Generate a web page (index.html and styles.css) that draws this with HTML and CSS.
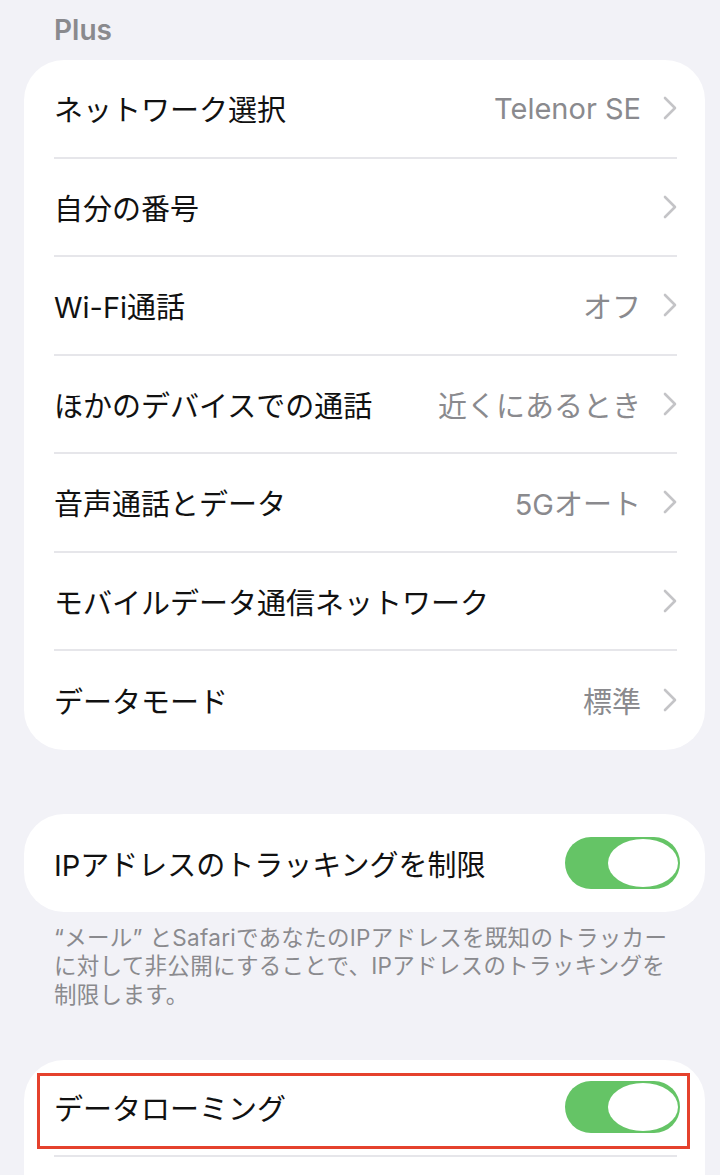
FILE: index.html
```html
<!DOCTYPE html>
<html lang="ja">
<head>
<meta charset="utf-8">
<link rel="stylesheet" href="styles.css">
</head>
<body>
<div class="page">
  <div class="section-title">Plus</div>
  <div class="card">
    <div class="row"><span class="label">ネットワーク選択</span><span class="value">Telenor SE</span><span class="chev"><svg viewBox="0 0 14 24" width="14" height="24"><path d="M2 2 L12 12 L2 22" fill="none" stroke="#c4c4c7" stroke-width="2.6" stroke-linecap="round" stroke-linejoin="round"/></svg></span></div>
    <div class="row"><span class="label">自分の番号</span><span class="value"></span><span class="chev"><svg viewBox="0 0 14 24" width="14" height="24"><path d="M2 2 L12 12 L2 22" fill="none" stroke="#c4c4c7" stroke-width="2.6" stroke-linecap="round" stroke-linejoin="round"/></svg></span></div>
    <div class="row"><span class="label">Wi-Fi通話</span><span class="value">オフ</span><span class="chev"><svg viewBox="0 0 14 24" width="14" height="24"><path d="M2 2 L12 12 L2 22" fill="none" stroke="#c4c4c7" stroke-width="2.6" stroke-linecap="round" stroke-linejoin="round"/></svg></span></div>
    <div class="row"><span class="label">ほかのデバイスでの通話</span><span class="value">近くにあるとき</span><span class="chev"><svg viewBox="0 0 14 24" width="14" height="24"><path d="M2 2 L12 12 L2 22" fill="none" stroke="#c4c4c7" stroke-width="2.6" stroke-linecap="round" stroke-linejoin="round"/></svg></span></div>
    <div class="row"><span class="label">音声通話とデータ</span><span class="value">5Gオート</span><span class="chev"><svg viewBox="0 0 14 24" width="14" height="24"><path d="M2 2 L12 12 L2 22" fill="none" stroke="#c4c4c7" stroke-width="2.6" stroke-linecap="round" stroke-linejoin="round"/></svg></span></div>
    <div class="row"><span class="label">モバイルデータ通信ネットワーク</span><span class="value"></span><span class="chev"><svg viewBox="0 0 14 24" width="14" height="24"><path d="M2 2 L12 12 L2 22" fill="none" stroke="#c4c4c7" stroke-width="2.6" stroke-linecap="round" stroke-linejoin="round"/></svg></span></div>
    <div class="row"><span class="label">データモード</span><span class="value">標準</span><span class="chev"><svg viewBox="0 0 14 24" width="14" height="24"><path d="M2 2 L12 12 L2 22" fill="none" stroke="#c4c4c7" stroke-width="2.6" stroke-linecap="round" stroke-linejoin="round"/></svg></span></div>
  </div>

  <div class="card card-toggle">
    <div class="row"><span class="label">IPアドレスのトラッキングを制限</span><span class="toggle"><span class="knob"></span></span></div>
  </div>
  <p class="footer">“メール” とSafariであなたのIPアドレスを既知のトラッカー<br>に対して非公開にすることで、IPアドレスのトラッキングを<br>制限します。</p>

  <div class="card card-last">
    <div class="row highlighted"><span class="label">データローミング</span><span class="toggle"><span class="knob"></span></span><span class="mark"></span></div>
    <div class="row"></div>
  </div>
</div>
</body>
</html>
```

FILE: styles.css
```css
html, body {
  margin: 0;
  padding: 0;
  background: #f2f2f7;
  height: 1175px;
  overflow: hidden;
}
.page {
  font-family: "Inter", "Noto Sans CJK JP", sans-serif;
  padding-left: 24px;
  width: 681px;
}
.section-title {
  font-size: 28px;
  font-weight: 600;
  color: #8a8a8e;
  padding-left: 30px;
  height: 60px;
  line-height: 60px;
}
.card {
  background: #fff;
  border-radius: 40px;
  overflow: hidden;
}
.row {
  position: relative;
  display: flex;
  align-items: center;
  height: 98.5px;
  margin-left: 30px;
  margin-right: 28px;
  border-bottom: 2px solid #e6e6ea;
  box-sizing: border-box;
}
.card > .row:last-child {
  border-bottom: none;
}
.label {
  font-size: 29px;
  color: #111;
  flex: 1;
  white-space: nowrap;
}
.value {
  font-size: 29px;
  color: #8a8a8e;
  white-space: nowrap;
  margin-right: 22px;
}
.chev {
  display: flex;
  align-items: center;
  width: 14px;
}
.card-toggle {
  margin-top: 64px;
}
.card-toggle .row {
  height: 98px;
}
.toggle {
  width: 115px;
  height: 52px;
  border-radius: 26px;
  background: #65c466;
  display: flex;
  align-items: center;
  justify-content: flex-end;
  padding-right: 2px;
  box-sizing: border-box;
  margin-right: -3px;
}
.knob {
  width: 70px;
  height: 48px;
  border-radius: 50%;
  background: #fff;
}
.footer {
  margin: 0;
  padding: 12px 0 0 30px;
  font-size: 22.5px;
  letter-spacing: 0.3px;
  line-height: 28.5px;
  color: #8a8a8e;
  height: 148px;
  box-sizing: border-box;
  white-space: nowrap;
}
.card-last {
  border-radius: 40px 40px 0 0;
  height: 120px;
}
.card-last .row {
  height: 97px;
}
.mark {
  position: absolute;
  left: -17px;
  top: 13px;
  width: 653px;
  height: 76px;
  border: 3px solid #e5412d;
  box-sizing: border-box;
  pointer-events: none;
}
```
